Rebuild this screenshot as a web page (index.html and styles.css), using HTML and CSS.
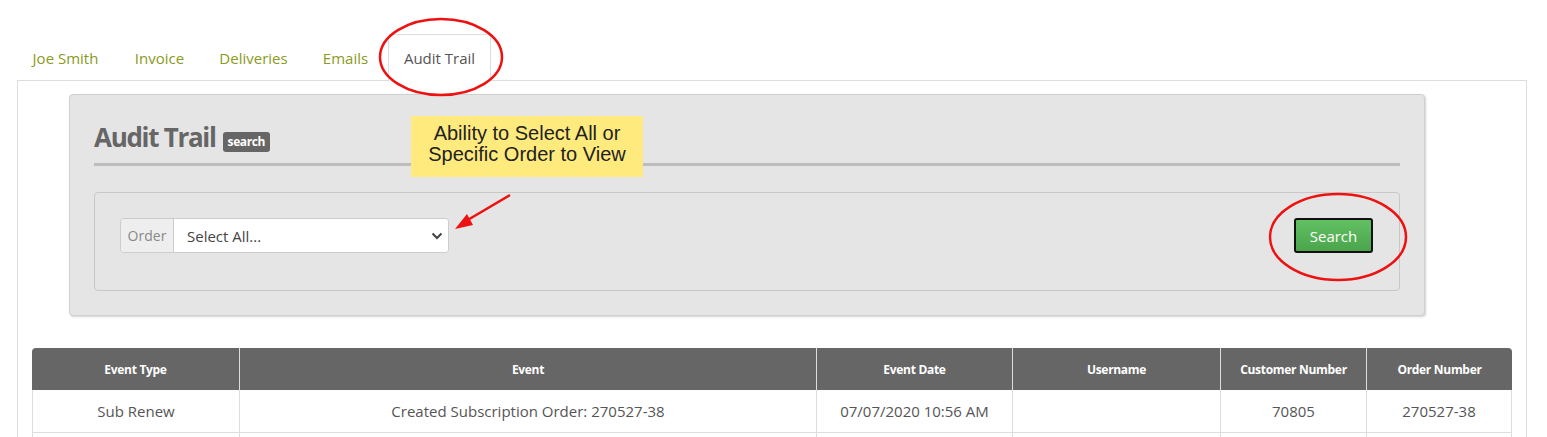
FILE: index.html
```html
<!DOCTYPE html>
<html>
<head>
<meta charset="utf-8">
<link rel="stylesheet" href="styles.css">
</head>
<body>
<div class="page">
  <ul class="tabs">
    <li class="tab">Joe Smith</li>
    <li class="tab">Invoice</li>
    <li class="tab">Deliveries</li>
    <li class="tab">Emails</li>
    <li class="tab active">Audit Trail</li>
  </ul>
  <div class="panel">
    <div class="well">
      <h2 class="title">Audit Trail <span class="badge">search</span></h2>
      <div class="rule"></div>
      <div class="fieldset">
        <div class="input-group">
          <span class="addon">Order</span>
          <div class="select">
            <span>Select All...</span>
            <svg class="chev" width="12" height="8" viewBox="0 0 12 8"><path d="M1.5 1.5 L6 6 L10.5 1.5" fill="none" stroke="#444" stroke-width="2"/></svg>
          </div>
        </div>
        <button class="btn">Search</button>
      </div>
    </div>
    <table class="grid">
      <colgroup>
        <col class="c1"><col class="c2"><col class="c3"><col class="c4"><col class="c5"><col class="c6">
      </colgroup>
      <thead>
        <tr><th>Event Type</th><th>Event</th><th>Event Date</th><th>Username</th><th>Customer Number</th><th>Order Number</th></tr>
      </thead>
      <tbody>
        <tr><td>Sub Renew</td><td>Created Subscription Order: 270527-38</td><td>07/07/2020 10:56 AM</td><td></td><td>70805</td><td>270527-38</td></tr>
        <tr><td>&nbsp;</td><td></td><td></td><td></td><td></td><td></td></tr>
      </tbody>
    </table>
  </div>
  <div class="callout">Ability to Select All or<br>Specific Order to View</div>
  <svg class="annot" width="1547" height="437" viewBox="0 0 1547 437">
    <ellipse cx="441" cy="57" rx="61" ry="38" fill="none" stroke="#ee1111" stroke-width="2.5"/>
    <ellipse cx="1338" cy="237" rx="68" ry="43" fill="none" stroke="#ee1111" stroke-width="2.5"/>
    <line x1="510" y1="195" x2="466" y2="221" stroke="#ee1111" stroke-width="2.5"/>
    <polygon points="455,229 467,214 473,225" fill="#ee1111"/>
  </svg>
</div>
</body>
</html>
```
FILE: styles.css
```css
html, body {
  margin: 0;
  padding: 0;
  background: #fff;
}
.page {
  position: relative;
  width: 1547px;
  height: 437px;
  overflow: hidden;
  font-family: "Open Sans", "Noto Sans", sans-serif;
  font-size: 15px;
  color: #555;
}
.tabs {
  list-style: none;
  margin: 0;
  padding: 34px 0 0 15px;
  display: flex;
}
.tab {
  padding: 12px 0 11px;
  margin-right: 2px;
  line-height: 22px;
  color: #8a9a22;
  border: 1px solid transparent;
  border-bottom: none;
  border-radius: 3px 3px 0 0;
  text-align: center;
  box-sizing: border-box;
}
.tab:nth-child(1) { width: 101px; }
.tab:nth-child(2) { width: 83px; }
.tab:nth-child(3) { width: 101px; }
.tab:nth-child(4) { width: 79px; }
.tab:nth-child(5) { width: 103px; margin-left: 1px; }
.tab.active {
  color: #555;
  border-color: #ddd;
  background: #fff;
  margin-bottom: -1px;
  position: relative;
}
.panel {
  margin-left: 17px;
  width: 1510px;
  border: 1px solid #ddd;
  border-bottom: none;
  padding: 13px 0 0 14px;
  height: 400px;
  box-sizing: border-box;
}
.well {
  margin-left: 37px;
  width: 1356px;
  height: 222px;
  box-sizing: border-box;
  background: #e5e5e5;
  border: 1px solid #d0d0d0;
  border-radius: 4px;
  box-shadow: 1px 1px 2px rgba(0,0,0,0.18);
  padding: 26px 24px 0 24px;
}
.title {
  margin: 0;
  font-size: 26px;
  font-weight: bold;
  color: #666;
  line-height: 33px;
  display: flex;
  align-items: center;
  gap: 7px;
  letter-spacing: -1.3px;
}
.badge {
  background: #666;
  color: #fff;
  font-size: 12px;
  font-weight: bold;
  line-height: 20px;
  height: 20px;
  padding: 0 5px;
  border-radius: 3px;
  margin-top: 8px;
  letter-spacing: -0.4px;
}
.rule {
  height: 3px;
  background: #bdbdbd;
  margin-top: 9px;
}
.fieldset {
  margin-top: 26px;
  height: 99px;
  box-sizing: border-box;
  border: 1px solid #c8c8c8;
  border-radius: 4px;
  display: flex;
  justify-content: space-between;
  align-items: flex-start;
  padding: 25px 26px 0 25px;
}
.input-group {
  display: flex;
  height: 35px;
  border: 1px solid #ccc;
  border-radius: 4px;
  box-sizing: border-box;
  overflow: hidden;
}
.addon {
  width: 52px;
  background: #eee;
  color: #888;
  border-right: 1px solid #ccc;
  display: flex;
  align-items: center;
  justify-content: center;
  font-size: 14px;
}
.select {
  width: 274px;
  background: #fff;
  color: #444;
  display: flex;
  align-items: center;
  justify-content: space-between;
  padding: 0 5px 0 13px;
  box-sizing: border-box;
}
.chev {
  margin-top: 1px;
}
.btn {
  width: 79px;
  height: 35px;
  font-family: inherit;
  font-size: 15px;
  color: #fff;
  background: linear-gradient(#62c063, #4aa44b);
  border: 2px solid #111;
  border-radius: 3px;
  padding: 0;
}
.grid {
  margin-top: 32px;
  width: 1480px;
  border-collapse: separate;
  border-spacing: 0;
  table-layout: fixed;
}
.c1 { width: 207px; }
.c2 { width: 577px; }
.c3 { width: 196px; }
.c4 { width: 208px; }
.c5 { width: 146px; }
.c6 { width: 146px; }
.grid th {
  background: #666;
  color: #fff;
  font-size: 12px;
  font-weight: bold;
  height: 42px;
  padding: 0;
  border-left: 1px solid #ddd;
  letter-spacing: -0.3px;
}
.grid th:first-child { border-left: none; border-top-left-radius: 4px; }
.grid th:last-child { border-top-right-radius: 4px; }
.grid td {
  height: 43px;
  padding: 0;
  text-align: center;
  border-left: 1px solid #ddd;
  border-bottom: 1px solid #ddd;
  box-sizing: border-box;
}
.grid td:last-child { border-right: 1px solid #ddd; }
.callout {
  position: absolute;
  left: 411px;
  top: 116px;
  width: 232px;
  height: 61px;
  box-sizing: border-box;
  padding-bottom: 6px;
  background: #ffeb7d;
  font-family: "Liberation Sans", Arial, sans-serif;
  font-size: 20px;
  line-height: 21px;
  color: #222;
  text-align: center;
  display: flex;
  align-items: center;
  justify-content: center;
}
.annot {
  position: absolute;
  left: 0;
  top: 0;
  pointer-events: none;
}
```
